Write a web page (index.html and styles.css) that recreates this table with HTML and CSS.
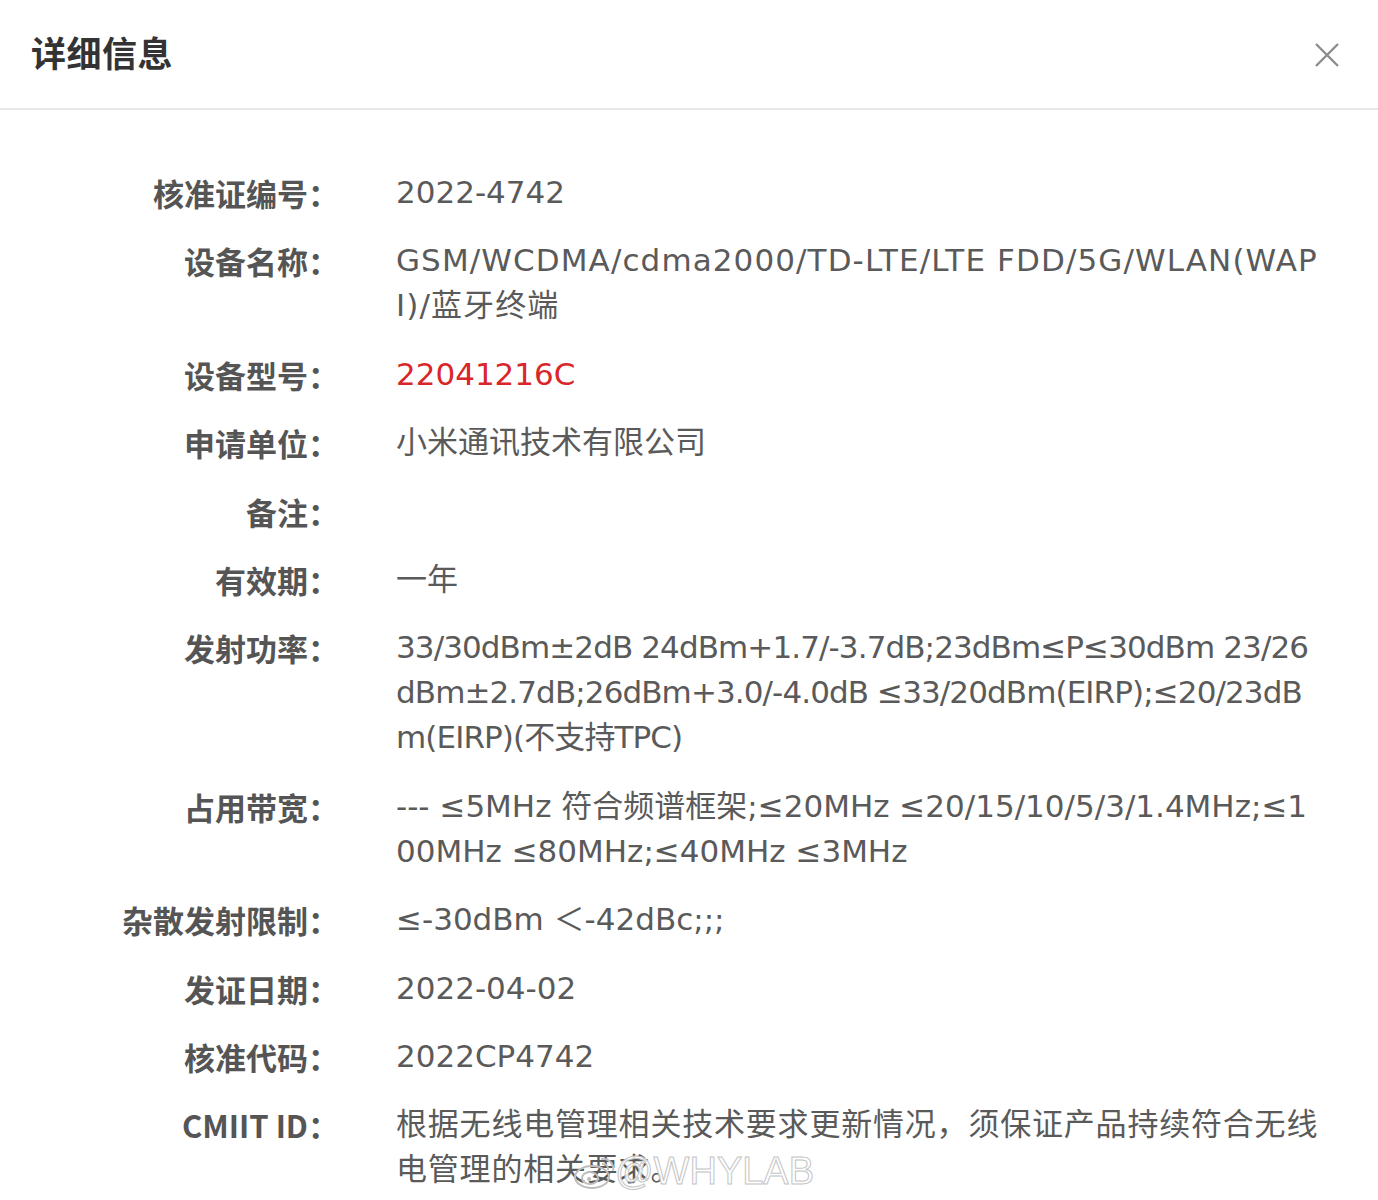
FILE: index.html
```html
<!DOCTYPE html>
<html lang="zh-CN">
<head>
<meta charset="utf-8">
<title>详细信息</title>
<link rel="stylesheet" href="styles.css">
</head>
<body>
<div class="dialog">
  <header class="head">
    <h1 class="title">详细信息</h1>
    <button class="close" aria-label="关闭">
      <svg width="26" height="26" viewBox="0 0 26 26"><path d="M2 2 L24 24 M24 2 L2 24" stroke="#8c8c8c" stroke-width="2.4" fill="none"/></svg>
    </button>
  </header>
  <dl class="info">
    <dt>核准证编号：</dt><dd>2022-4742</dd>
    <dt>设备名称：</dt><dd class="wide">GSM/WCDMA/cdma2000/TD-LTE/LTE FDD/5G/WLAN(WAPI)/蓝牙终端</dd>
    <dt>设备型号：</dt><dd class="red">22041216C</dd>
    <dt>申请单位：</dt><dd>小米通讯技术有限公司</dd>
    <dt>备注：</dt><dd></dd>
    <dt>有效期：</dt><dd>一年</dd>
    <dt>发射功率：</dt><dd class="tight">33/30dBm±2dB 24dBm+1.7/-3.7dB;23dBm≤P≤30dBm 23/26dBm±2.7dB;26dBm+3.0/-4.0dB ≤33/20dBm(EIRP);≤20/23dBm(EIRP)(不支持TPC)</dd>
    <dt>占用带宽：</dt><dd>--- ≤5MHz 符合频谱框架;≤20MHz ≤20/15/10/5/3/1.4MHz;≤100MHz ≤80MHz;≤40MHz ≤3MHz</dd>
    <dt>杂散发射限制：</dt><dd>≤-30dBm ＜-42dBc;;;</dd>
    <dt>发证日期：</dt><dd>2022-04-02</dd>
    <dt>核准代码：</dt><dd>2022CP4742</dd>
    <dt>CMIIT ID：</dt><dd class="cjk">根据无线电管理相关技术要求更新情况，须保证产品持续符合无线电管理的相关要求。</dd>
  </dl>
  <div class="watermark">
    <svg class="wb" width="44" height="38" viewBox="0 0 44 38">
      <ellipse cx="19" cy="24" rx="17" ry="11" fill="none" stroke="#bdbdbd" stroke-width="2"/>
      <ellipse cx="17" cy="25" rx="8" ry="6" fill="none" stroke="#bdbdbd" stroke-width="2"/>
      <circle cx="16" cy="26" r="2" fill="#bdbdbd"/>
      <path d="M28 6 A10 10 0 0 1 40 18" stroke="#bdbdbd" stroke-width="2" fill="none"/>
      <path d="M29 11 A5 5 0 0 1 35 17" stroke="#bdbdbd" stroke-width="2" fill="none"/>
    </svg>
    <span class="wm-text">@WHYLAB</span>
  </div>
</div>
</body>
</html>
```

FILE: styles.css
```css
html, body {
  margin: 0;
  padding: 0;
  background: #ffffff;
}
body {
  font-family: "DejaVu Sans", "Noto Sans CJK SC", sans-serif;
  color: #555555;
}
.dialog {
  position: relative;
  width: 1378px;
  overflow: hidden;
}
.head {
  height: 110px;
  border-bottom: 2px solid #e8e8e8;
  display: flex;
  align-items: center;
  justify-content: space-between;
  padding: 0 38px 0 31px;
  box-sizing: border-box;
}
.title {
  margin: 0;
  margin-top: -6px;
  font-family: "Noto Sans CJK SC", sans-serif;
  font-size: 35px;
  font-weight: 700;
  color: #333333;
  letter-spacing: 0.5px;
}
.close {
  border: 0;
  background: none;
  padding: 0;
  width: 26px;
  height: 26px;
  display: flex;
  align-items: center;
  justify-content: center;
  margin-top: 2px;
}
.info {
  margin: 0;
  padding: 60px 0 0 0;
  display: grid;
  grid-template-columns: 339px 924px;
  column-gap: 57px;
  row-gap: 23.4px;
  font-size: 31px;
  line-height: 45px;
}
.info dt {
  text-align: right;
  font-family: "Noto Sans CJK SC", sans-serif;
  font-weight: 700;
  color: #555555;
  white-space: nowrap;
}
.info dd {
  margin: 0;
  color: #5a5a5a;
  word-break: break-all;
  min-height: 45px;
}
.info dd.wide {
  letter-spacing: 1.1px;
}
.info dd.tight {
  letter-spacing: -0.9px;
}
.info dd.cjk {
  letter-spacing: 0.8px;
}
.info dd.red {
  color: #d8262b;
}
.watermark {
  position: absolute;
  left: 573px;
  top: 1150px;
  display: flex;
  align-items: center;
}
.wm-text {
  font-family: "Liberation Sans", sans-serif;
  font-size: 38px;
  color: rgba(255, 255, 255, 0.85);
  -webkit-text-stroke: 1px #c4c4c4;
  margin-left: -2px;
}
```
